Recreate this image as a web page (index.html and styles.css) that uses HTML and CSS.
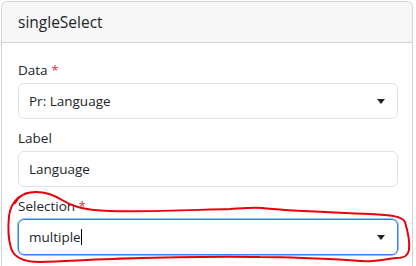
FILE: index.html
```html
<!DOCTYPE html>
<html lang="en">
<head>
  <meta charset="UTF-8">
  <meta name="viewport" content="width=device-width, initial-scale=1.0">
  <title>singleSelect</title>
  <link rel="stylesheet" href="styles.css">
</head>
<body>
  <div class="card">
    <div class="card-header">singleSelect</div>
    <div class="card-body">
      <div class="field">
        <label class="field-label">Data <span class="required">*</span></label>
        <div class="select">
          <span class="value">Pr: Language</span>
          <span class="caret"></span>
        </div>
      </div>
      <div class="field">
        <label class="field-label">Label</label>
        <div class="input">
          <span class="value">Language</span>
        </div>
      </div>
      <div class="field">
        <label class="field-label">Selection <span class="required">*</span></label>
        <div class="select focused">
          <span class="value">multiple<span class="cursor"></span></span>
          <span class="caret"></span>
        </div>
      </div>
    </div>
  </div>

  <!-- hand-drawn annotation on top of the screenshot -->
  <svg class="annotation" width="416" height="266" viewBox="0 0 416 266">
    <path d="M15 203 C19 195 26 192 36 192 C46 192 54 195 62 200 C70 205 80 210 110 211
             C150 212 190 210 230 209 C245 208 255 207 262 208 C285 211 330 212 370 214
             C390 215 402 216 405 222 C408 232 410 242 409 250 C408 256 404 258 396 258
             C385 259 375 262 362 261 C330 259 300 257 260 257 C220 256 180 257 140 258
             C100 259 70 261 40 262 C24 262 14 258 11 248 C8 238 8 226 9 216 C10 208 13 202 19 197"
          fill="none" stroke="#e8000b" stroke-width="2" stroke-linecap="round"/>
  </svg>
</body>
</html>
```

FILE: styles.css
```css
body {
  margin: 0;
  background: #fff;
  font-family: "Open Sans", "Noto Sans", sans-serif;
  color: #212529;
  position: relative;
  overflow: hidden;
  height: 266px;
}
.card {
  margin: 1px 0 0 1px;
  width: 412px;
  height: 265px;
  box-sizing: border-box;
  border: 1px solid #d3d3d3;
  border-bottom: 0;
  border-radius: 6px 6px 0 0;
}
.card-header {
  height: 40px;
  line-height: 40px;
  padding: 0 16px;
  font-size: 15.5px;
  background: #f7f7f7;
  border-bottom: 1px solid #d3d3d3;
  border-radius: 6px 6px 0 0;
}
.card-body {
  padding: 17px 14px 0 16px;
}
.field {
  margin-bottom: 9px;
}
.field-label {
  display: block;
  font-size: 13.5px;
  line-height: 21px;
  margin-bottom: 2px;
}
.required {
  color: #dc3545;
}
.select,
.input {
  height: 36px;
  box-sizing: border-box;
  border: 1px solid #dee2e6;
  border-radius: 6px;
  padding: 0 12px 0 10px;
  display: flex;
  align-items: center;
  justify-content: space-between;
  font-size: 13.5px;
}
.select.focused {
  border-color: #2f7ff5;
  box-shadow: 0 0 0 0.5px #2f7ff5;
}
.value {
  display: flex;
  align-items: center;
}
.cursor {
  display: inline-block;
  width: 1px;
  height: 16px;
  background: #000;
}
.caret {
  width: 0;
  height: 0;
  border-top: 5px solid #222;
  border-left: 4px solid transparent;
  border-right: 4px solid transparent;
  margin-top: 1px;
}
.annotation {
  position: absolute;
  left: 0;
  top: 0;
  pointer-events: none;
}
```
